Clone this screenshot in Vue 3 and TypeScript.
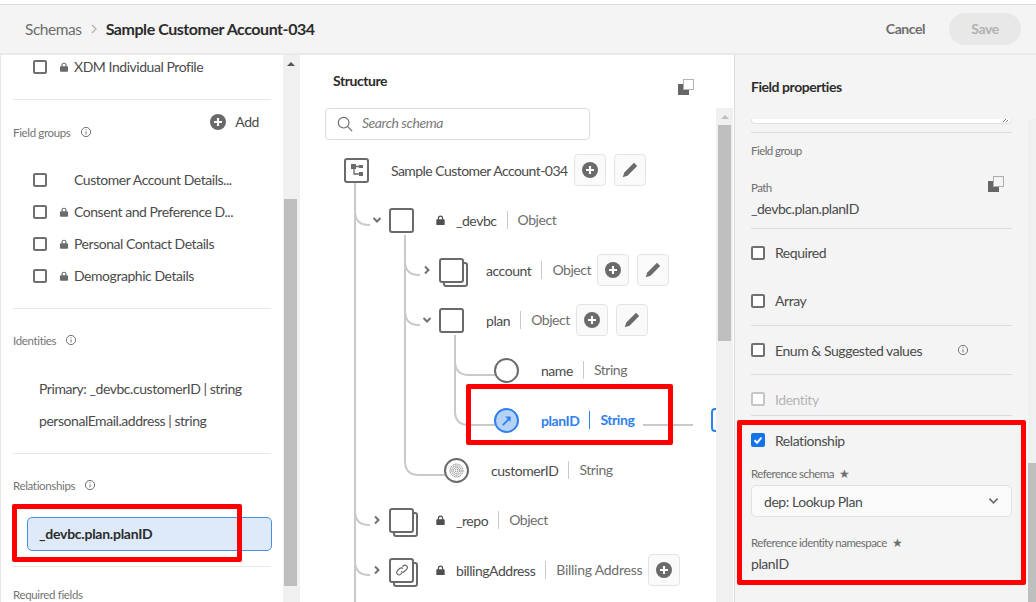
<script setup lang="ts">
interface TreeRow {
  label: string
  type: string
  left: number
  icon: 'root' | 'box' | 'stack' | 'circle' | 'rel' | 'print' | 'link'
  chevron?: 'down' | 'right'
  lock?: boolean
  add?: boolean
  edit?: boolean
  active?: boolean
}

const rows: TreeRow[] = [
  { label: 'Sample Customer Account-034', type: '', left: 344, icon: 'root', add: true, edit: true },
  { label: '_devbc', type: 'Object', left: 389, icon: 'box', chevron: 'down', lock: true },
  { label: 'account', type: 'Object', left: 439, icon: 'stack', chevron: 'right', add: true, edit: true },
  { label: 'plan', type: 'Object', left: 439, icon: 'box', chevron: 'down', add: true, edit: true },
  { label: 'name', type: 'String', left: 494, icon: 'circle' },
  { label: 'planID', type: 'String', left: 494, icon: 'rel', active: true },
  { label: 'customerID', type: 'String', left: 444, icon: 'print' },
  { label: '_repo', type: 'Object', left: 389, icon: 'stack', chevron: 'right', lock: true },
  { label: 'billingAddress', type: 'Billing Address', left: 389, icon: 'link', chevron: 'right', lock: true, add: true },
]

const fieldGroups = [
  { name: 'Customer Account Details...', lock: false },
  { name: 'Consent and Preference D...', lock: true },
  { name: 'Personal Contact Details', lock: true },
  { name: 'Demographic Details', lock: true },
]

const plainChecks = ['Required', 'Array']
</script>

<template>
  <div class="page">
    <header class="topbar">
      <div class="crumbs">
        <span class="crumb">Schemas</span>
        <svg class="crumb-sep" viewBox="0 0 8 12"><path d="M2 2l4 4-4 4" /></svg>
        <span class="crumb-current">Sample Customer Account-034</span>
      </div>
      <div class="actions">
        <span class="cancel">Cancel</span>
        <span class="save">Save</span>
      </div>
    </header>

    <div class="body">
      <aside class="left">
        <div class="left-scroll">
          <section class="sec sec-profile">
            <div class="check-row">
              <span class="checkbox" />
              <svg class="lock" viewBox="0 0 10 12"><path d="M5 .6A3.2 3.2 0 0 0 1.800 3.800V5H1a1 1 0 0 0-1 1v5a1 1 0 0 0 1 1h8a1 1 0 0 0 1-1V6a1 1 0 0 0-1-1h-.8V3.800A3.2 3.2 0 0 0 5 .6zM3.200 5V3.800a1.800 1.800 0 0 1 3.600 0V5z" fill-rule="evenodd" /></svg>
              <span>XDM Individual Profile</span>
            </div>
          </section>

          <section class="sec sec-groups">
            <div class="groups-head">
              <span class="sec-label">Field groups
                <svg class="info" viewBox="0 0 12 12"><circle cx="6" cy="6" r="4.600" /><path d="M6 5.400v3M6 3.200v1" /></svg>
              </span>
              <span class="add">
                <svg class="plus" viewBox="0 0 18 18"><circle cx="9" cy="9" r="9" /><path d="M9 4.500v9M4.500 9h9" /></svg>
                Add
              </span>
            </div>
            <div v-for="g in fieldGroups" :key="g.name" class="check-row group-row">
              <span class="checkbox" />
              <svg v-if="g.lock" class="lock" viewBox="0 0 10 12"><path d="M5 .6A3.2 3.2 0 0 0 1.800 3.800V5H1a1 1 0 0 0-1 1v5a1 1 0 0 0 1 1h8a1 1 0 0 0 1-1V6a1 1 0 0 0-1-1h-.8V3.800A3.2 3.2 0 0 0 5 .6zM3.200 5V3.800a1.800 1.800 0 0 1 3.600 0V5z" fill-rule="evenodd" /></svg>
              <span v-else class="lock" />
              <span>{{ g.name }}</span>
            </div>
          </section>

          <section class="sec sec-identities">
            <span class="sec-label">Identities
              <svg class="info" viewBox="0 0 12 12"><circle cx="6" cy="6" r="4.600" /><path d="M6 5.400v3M6 3.200v1" /></svg>
            </span>
            <div class="identity first">Primary: _devbc.customerID | string</div>
            <div class="identity">personalEmail.address | string</div>
          </section>

          <section class="sec sec-rel">
            <span class="sec-label">Relationships
              <svg class="info" viewBox="0 0 12 12"><circle cx="6" cy="6" r="4.600" /><path d="M6 5.400v3M6 3.200v1" /></svg>
            </span>
            <div class="rel-item">_devbc.plan.planID</div>
          </section>

          <section class="sec-required">
            <span class="sec-label">Required fields</span>
          </section>
        </div>
        <div class="left-bar">
          <i class="arrow-up" />
          <div class="left-thumb" />
        </div>
        <div class="mark mark-left" />
      </aside>

      <main class="middle">
        <div class="mid-head">
          <h2>Structure</h2>
          <svg class="copy-icon" viewBox="0 0 16 16"><path d="M0 5h5v6h6v5H0z" class="solid" /><rect x="5.500" y=".5" width="10" height="10" class="dots" /></svg>
        </div>
        <div class="search">
          <svg viewBox="0 0 18 18"><circle cx="7.500" cy="7.500" r="6" /><path d="M12 12l5 5" /></svg>
          <span>Search schema</span>
        </div>

        <div class="tree">
          <svg class="lines" viewBox="0 0 417 500" width="417" height="500">
            <path d="M55 30V500M55 66q0 14 14 14h1M55 366q0 14 14 14h1M55 416q0 14 14 14h1" />
            <path d="M105 90V316q0 14 14 14h26M105 116q0 14 14 14h1M105 166q0 14 14 14h1" />
            <path d="M155 190V266q0 14 14 14h26M155 216q0 14 14 14h26" />
            <path d="M343 280h50" />
          </svg>
          <i class="ref-stub" />

          <div v-for="r in rows" :key="r.label" class="row" :class="{ active: r.active }" :style="{ paddingLeft: r.left - 325 + 'px' }">
            <svg v-if="r.chevron" class="chev" viewBox="0 0 10 10">
              <path v-if="r.chevron === 'down'" d="M1.500 3l3.500 3.500L8.500 3" />
              <path v-else d="M3 1.500L6.500 5 3 8.500" />
            </svg>

            <span class="node" :class="'node-' + r.icon">
              <svg v-if="r.icon === 'root'" viewBox="0 0 14 14" class="glyph"><path d="M1 1h5v5H1zM9 2h4v3H9zM9 9h4v4H9z" /><path d="M4 5v6h6M5 3.500h5" class="thin" /></svg>
              <svg v-else-if="r.icon === 'rel'" viewBox="0 0 12 12" class="glyph"><path d="M2 11L8.500 4.500" class="arrow" /><path d="M4.500 1.500h6v6z" /></svg>
              <svg v-else-if="r.icon === 'print'" viewBox="0 0 14 14" class="glyph print"><circle cx="7" cy="7" r="6" /><circle cx="7" cy="7" r="4.400" /><circle cx="7" cy="7" r="2.900" /><circle cx="7" cy="7" r="1.400" /></svg>
              <svg v-else-if="r.icon === 'link'" viewBox="0 0 14 14" class="glyph link"><path d="M6 8.500a2.400 2.400 0 0 0 3.400 0l2.200-2.200a2.400 2.400 0 0 0-3.400-3.400l-.9.9M8 5.500a2.400 2.400 0 0 0-3.400 0l-2.200 2.200a2.400 2.400 0 0 0 3.400 3.400l.9-.9" /></svg>
            </span>

            <svg v-if="r.lock" class="lock tree-lock" viewBox="0 0 10 12"><path d="M5 .6A3.2 3.2 0 0 0 1.800 3.800V5H1a1 1 0 0 0-1 1v5a1 1 0 0 0 1 1h8a1 1 0 0 0 1-1V6a1 1 0 0 0-1-1h-.8V3.800A3.2 3.2 0 0 0 5 .6zM3.200 5V3.800a1.800 1.800 0 0 1 3.600 0V5z" fill-rule="evenodd" /></svg>
            <span class="label">{{ r.label }}</span>
            <span v-if="r.type" class="type">{{ r.type }}</span>
            <span v-if="r.add" class="tool">
              <svg class="plus" viewBox="0 0 18 18"><circle cx="9" cy="9" r="9" /><path d="M9 4.500v9M4.500 9h9" /></svg>
            </span>
            <span v-if="r.edit" class="tool">
              <svg class="pencil" viewBox="0 0 16 16"><path d="M12 .8l3.200 3.200L5.500 13.700.8 15.200l1.500-4.700z" /></svg>
            </span>
          </div>
        </div>

        <div class="mid-bar">
          <i class="arrow-up pale" />
          <div class="mid-thumb" />
        </div>
        <div class="mark mark-mid" />
      </main>

      <aside class="right">
        <h2>Field properties</h2>
        <div class="right-scroll">
          <div class="props">
            <div class="textarea-end">
              <svg viewBox="0 0 8 8"><path d="M1 7l4-4M4.500 7L7 4.500" /></svg>
            </div>
            <div class="prop-group">
              <div class="small">Field group</div>
              <div class="path-head">
                <span class="small">Path</span>
                <svg class="copy-icon" viewBox="0 0 16 16"><path d="M0 5h5v6h6v5H0z" class="solid" /><rect x="5.500" y=".5" width="10" height="10" class="dots" /></svg>
              </div>
              <div class="path-value">_devbc.plan.planID</div>
            </div>
            <div class="checks-a">
              <div v-for="c in plainChecks" :key="c" class="prop-check"><span class="checkbox" />{{ c }}</div>
            </div>
            <div class="prop-line enum">
              <span class="checkbox" />Enum &amp; Suggested values
              <svg class="info" viewBox="0 0 12 12"><circle cx="6" cy="6" r="4.600" /><path d="M6 5.400v3M6 3.200v1" /></svg>
            </div>
            <div class="prop-line disabled"><span class="checkbox" />Identity</div>
            <div class="relation">
              <div class="prop-check-on">
                <span class="checkbox on">
                  <svg viewBox="0 0 12 12"><path d="M2.500 6.200l2.500 2.500 4.500-5" /></svg>
                </span>
                Relationship
              </div>
              <div class="small req">Reference schema <b>★</b></div>
              <div class="select">
                <span>dep: Lookup Plan</span>
                <svg viewBox="0 0 12 8"><path d="M1.500 1.500L6 6l4.500-4.500" /></svg>
              </div>
              <div class="small req ns">Reference identity namespace <b>★</b></div>
              <div class="ns-value">planID</div>
            </div>
          </div>
          <div class="right-bar"><i /></div>
        </div>
        <div class="mark mark-right" />
      </aside>
    </div>
  </div>
</template>

<style scoped>
.page {
  width: 1036px;
  height: 602px;
  overflow: hidden;
  display: flex;
  flex-direction: column;
  padding-top: 4px;
  box-sizing: border-box;
  background: #fff;
  color: #4b4b4b;
  font-family: Lato, "Open Sans", sans-serif;
  font-size: 14px;
  letter-spacing: -0.45px;
}

.topbar {
  height: 51px;
  flex: none;
  box-sizing: border-box;
  display: flex;
  align-items: center;
  justify-content: space-between;
  padding: 0 15px 1px 25px;
  background: #f4f4f4;
  border-top: 1px solid #d9d9d9;
  border-bottom: 2px solid #eaeaea;
}

.crumbs {
  display: flex;
  align-items: center;
}

.crumb {
  font-size: 15.5px;
  color: #6e6e6e;
}

.crumb-sep {
  width: 8px;
  height: 12px;
  margin: 0 8px 0 8px;
  fill: none;
  stroke: #b3b3b3;
  stroke-width: 1.3;
}

.crumb-current {
  font-size: 16px;
  font-weight: 700;
  color: #2c2c2c;
}

.actions {
  display: flex;
  align-items: center;
  gap: 24px;
}

.cancel {
  font-weight: 700;
  color: #6e6e6e;
}

.save {
  width: 72px;
  height: 32px;
  border-radius: 16px;
  background: #e8e8e8;
  color: #b1b1b1;
  font-weight: 700;
  display: flex;
  align-items: center;
  justify-content: center;
}

.body {
  flex: 1;
  min-height: 0;
  display: flex;
}

.left {
  width: 300px;
  flex: none;
  display: flex;
  position: relative;
  border-left: 1px solid #e8e8e8;
  box-sizing: border-box;
}

.left-scroll {
  width: 282px;
  flex: none;
  padding: 0 12px;
  box-sizing: border-box;
}

.sec {
  border-bottom: 1px solid #e8e8e8;
  box-sizing: border-box;
}

.sec-profile {
  height: 45px;
}

.check-row {
  height: 24px;
  display: flex;
  align-items: center;
  padding-left: 20px;
}

.check-row > span:last-child {
  margin-top: -1px;
}

.checkbox {
  width: 14px;
  height: 14px;
  flex: none;
  display: inline-block;
  box-sizing: border-box;
  border: 2px solid #707070;
  border-radius: 2px;
  background: #fff;
}

.lock {
  width: 8px;
  height: 10px;
  flex: none;
  fill: #6a6a6a;
}

.check-row .checkbox {
  margin-right: 13px;
}

.check-row .lock {
  margin-right: 6px;
}

.sec-groups {
  height: 209px;
}

.groups-head {
  height: 64px;
  position: relative;
}

.sec-label {
  display: flex;
  align-items: center;
  font-size: 11.5px;
  color: #747474;
  height: 16px;
  letter-spacing: -0.35px;
}

.groups-head .sec-label {
  padding-top: 24px;
}

.info {
  width: 12px;
  height: 12px;
  margin-left: 9px;
  fill: none;
  stroke: #747474;
  stroke-width: 1;
}

.add {
  position: absolute;
  top: 13px;
  right: 12px;
  display: flex;
  align-items: center;
  gap: 9px;
  color: #4b4b4b;
}

.plus {
  width: 16px;
  height: 16px;
  display: block;
}

.plus circle {
  fill: #6a6a6a;
}

.plus path {
  stroke: #fff;
  stroke-width: 2.4;
  fill: none;
}

.group-row {
  height: 32px;
}

.sec-identities {
  height: 145px;
  padding-top: 23px;
}

.identity {
  height: 32px;
  line-height: 31px;
  padding-left: 26px;
}

.identity.first {
  margin-top: 25px;
}

.sec-rel {
  height: 113px;
  padding-top: 23px;
}

.rel-item {
  margin: 24px -1px 0 14px;
  height: 34px;
  line-height: 31px;
  box-sizing: border-box;
  padding-left: 11px;
  background: #deeafa;
  border: 1px solid #4a90e2;
  border-radius: 5px;
  color: #2c2c2c;
  font-weight: 700;
  letter-spacing: -0.25px;
}

.sec-required {
  padding-top: 19px;
}

.left-bar {
  width: 17px;
  flex: none;
  position: relative;
  background: #f0f0f0;
  box-sizing: border-box;
}

.left-thumb {
  position: absolute;
  left: 1px;
  right: 3px;
  top: 144px;
  height: 387px;
  background: #bebebe;
}

.arrow-up {
  position: absolute;
  top: 7px;
  left: 4px;
  border: 4px solid transparent;
  border-top: 0;
  border-bottom: 4px solid #555;
}

.arrow-up.pale {
  border-bottom-color: #bdbdbd;
  left: 5px;
}

.mark {
  position: absolute;
  border: 5px solid #f00;
  border-radius: 2px;
  box-sizing: border-box;
  pointer-events: none;
}

.mark-left {
  left: 11px;
  top: 449px;
  width: 230px;
  height: 58px;
}

.middle {
  width: 434px;
  flex: none;
  position: relative;
  box-sizing: border-box;
  padding-left: 25px;
}

h2 {
  margin: 0;
  font-size: 14px;
  font-weight: 700;
  color: #2c2c2c;
}

.mid-head {
  height: 53px;
  display: flex;
  justify-content: space-between;
  align-items: flex-start;
  padding: 17px 40px 0 8px;
  box-sizing: border-box;
}

.copy-icon {
  width: 16px;
  height: 16px;
  margin-top: 7px;
}

.copy-icon .solid {
  fill: #666;
}

.copy-icon .dots {
  fill: none;
  stroke: #666;
  stroke-width: 1;
  stroke-dasharray: 1 1;
}

.search {
  width: 265px;
  height: 32px;
  box-sizing: border-box;
  border: 1px solid #dcdcdc;
  border-radius: 4px;
  display: flex;
  align-items: center;
  padding-left: 11px;
  gap: 9px;
  font-style: italic;
  color: #7a7a7a;
}

.search span {
  margin-top: -3px;
}

.search svg {
  width: 16px;
  height: 16px;
  fill: none;
  stroke: #6a6a6a;
  stroke-width: 1.3;
}

.tree {
  position: absolute;
  inset: 90px 17px 0 0;
  overflow: hidden;
  padding-left: 25px;
}

.lines {
  position: absolute;
  left: 0;
  top: 0;
  fill: none;
  stroke: #c9c9c9;
  stroke-width: 2;
}

.ref-stub {
  position: absolute;
  left: 411px;
  top: 263px;
  width: 8px;
  height: 24px;
  box-sizing: border-box;
  border: 2px solid #2f80ed;
  border-radius: 4px 0 0 4px;
  background: #fff;
}

.row {
  height: 50px;
  display: flex;
  align-items: center;
  position: relative;
  color: #4b4b4b;
  white-space: nowrap;
}

.chev {
  position: absolute;
  width: 10px;
  height: 10px;
  margin-left: -17px;
  fill: none;
  stroke: #707070;
  stroke-width: 2;
}

.node {
  width: 25px;
  height: 25px;
  flex: none;
  box-sizing: border-box;
  border: 2px solid #6a6a6a;
  border-radius: 3px;
  background: #fff;
  display: flex;
  align-items: center;
  justify-content: center;
  position: relative;
  margin-right: 22px;
}

.node-stack,
.node-link {
  box-shadow: 4px 4px 0 -2px #fff, 4px 4px 0 0 #6a6a6a;
}

.node-circle,
.node-rel,
.node-print {
  border-radius: 50%;
}

.node-rel {
  background: #b5d2f7;
  border-color: #2f80ed;
}

.node-root ~ .label {
  letter-spacing: -0.55px;
}

.node-link ~ .type {
  letter-spacing: -0.25px;
}

.glyph {
  width: 14px;
  height: 14px;
  fill: #6a6a6a;
}

.glyph .thin {
  fill: none;
  stroke: #6a6a6a;
  stroke-width: 1.3;
}

.node-rel .glyph {
  width: 11px;
  height: 11px;
  fill: #2f80ed;
}

.glyph .arrow {
  stroke: #2f80ed;
  stroke-width: 2;
  fill: none;
}

.glyph.print {
  width: 15px;
  height: 15px;
  fill: none;
  stroke: #777;
  stroke-width: 0.8;
  stroke-dasharray: 1.5 0.5;
}

.glyph.link {
  fill: none;
  stroke: #6a6a6a;
  stroke-width: 1.2;
}

.tree-lock {
  width: 9px;
  margin: 0 11px 0 0;
  fill: #4f4f4f;
}

.label + .type {
  margin-left: 10px;
  padding-left: 10px;
  border-left: 1px solid #c9c9c9;
  line-height: 18px;
}

.type {
  color: #6e6e6e;
}

.row.active .label,
.row.active .type {
  color: #2f80ed;
  font-weight: 700;
}

.row.active .type {
  border-left-color: #2f80ed;
}

.tool {
  width: 32px;
  height: 32px;
  flex: none;
  margin-left: 6px;
  box-sizing: border-box;
  border: 1px solid #e4e4e4;
  border-radius: 4px;
  background: #fafafa;
  display: flex;
  align-items: center;
  justify-content: center;
}

.tool + .tool {
  margin-left: 8px;
}

.pencil {
  width: 16px;
  height: 16px;
  fill: #6a6a6a;
}

.mid-bar {
  position: absolute;
  right: 1px;
  top: 53px;
  bottom: 0;
  width: 17px;
  background: #f0f0f0;
}

.mid-thumb {
  position: absolute;
  left: 2px;
  width: 13px;
  top: 17px;
  height: 216px;
  background: #bebebe;
}

.right {
  flex: 1;
  min-width: 0;
  position: relative;
  background: #f4f4f4;
  border-left: 1px solid #dcdcdc;
}

.right h2 {
  height: 64px;
  box-sizing: border-box;
  padding: 23px 0 0 16px;
}

.right-scroll {
  height: 483px;
  display: flex;
  justify-content: space-between;
  overflow: hidden;
}

.props {
  width: 261px;
  margin-left: 16px;
}

.textarea-end {
  height: 4px;
  background: #fff;
  border: 1px solid #e2e2e2;
  border-top: 0;
  border-radius: 0 0 4px 4px;
  margin-bottom: 8px;
  position: relative;
}

.textarea-end svg {
  position: absolute;
  right: 2px;
  bottom: 0;
  width: 7px;
  height: 7px;
  fill: none;
  stroke: #666;
  stroke-width: 1;
}

.prop-group {
  box-sizing: border-box;
  border-top: 1px solid #dcdcdc;
  border-bottom: 1px solid #dcdcdc;
  height: 97px;
  padding-top: 10px;
}

.small {
  font-size: 11.5px;
  color: #6e6e6e;
  line-height: 16px;
  letter-spacing: -0.55px;
}

.path-head {
  display: flex;
  justify-content: space-between;
  padding-right: 8px;
  margin-top: 21px;
  align-items: center;
}

.path-head .copy-icon {
  margin-top: -8px;
}

.path-value {
  margin-top: 4px;
  line-height: 18px;
}

.checks-a {
  box-sizing: border-box;
  border-bottom: 1px solid #dcdcdc;
  height: 97px;
}

.prop-check {
  height: 47px;
  margin-bottom: 1px;
  display: flex;
  align-items: center;
}

.prop-check .checkbox,
.prop-line .checkbox,
.prop-check-on .checkbox {
  margin-right: 10px;
  background: #fff;
}

.prop-line {
  height: 49px;
  box-sizing: border-box;
  display: flex;
  align-items: center;
  border-bottom: 1px solid #dcdcdc;
}

.enum .info {
  margin-left: 35px;
}

.disabled {
  height: 41px;
  padding-top: 8px;
  color: #b4b4b4;
}

.disabled .checkbox {
  border-color: #c6c6c6;
}

.relation {
  padding-top: 16px;
}

.prop-check-on {
  display: flex;
  align-items: center;
  height: 16px;
}

.checkbox.on {
  background: #1473e6;
  border-color: #1473e6;
  display: flex;
  align-items: center;
  justify-content: center;
}

.checkbox.on svg {
  width: 12px;
  height: 12px;
  flex: none;
  fill: none;
  stroke: #fff;
  stroke-width: 2;
}

.req {
  margin-top: 18px;
}

.req b {
  font-weight: 400;
  font-size: 12px;
  margin-left: 3px;
  color: #6e6e6e;
}

.select {
  margin-top: 3px;
  height: 32px;
  box-sizing: border-box;
  background: #fafafa;
  border: 1px solid #e2e2e2;
  border-radius: 5px;
  display: flex;
  align-items: center;
  justify-content: space-between;
  padding: 0 12px;
}

.select svg {
  width: 11px;
  height: 8px;
  fill: none;
  stroke: #6a6a6a;
  stroke-width: 1.8;
}

.ns {
  margin-top: 18px;
}

.ns-value {
  margin-top: 4px;
  line-height: 18px;
}

.right-bar {
  width: 8px;
  position: relative;
  background: #f0f0f0;
}

.right-bar i {
  position: absolute;
  left: 0;
  right: 0;
  top: 344px;
  bottom: 0;
  background: #bebebe;
}

.mark-mid {
  left: 166px;
  top: 329px;
  width: 207px;
  height: 61px;
}

.mark-right {
  left: 2px;
  top: 365px;
  width: 289px;
  height: 165px;
}
</style>
